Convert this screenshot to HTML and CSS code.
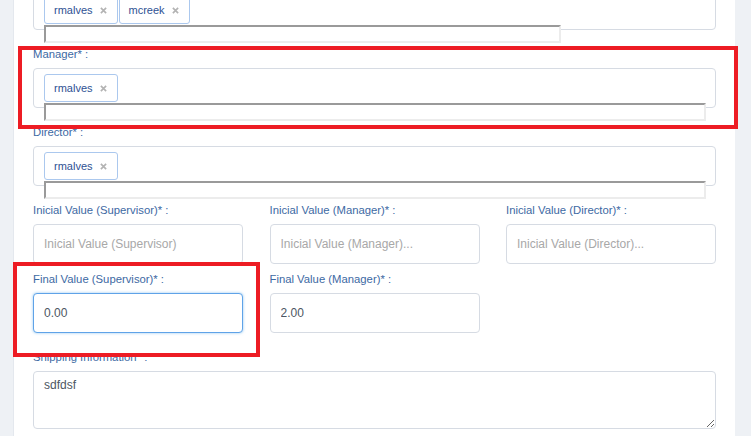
FILE: index.html
```html
<!DOCTYPE html>
<html>
<head>
<meta charset="utf-8">
<link rel="stylesheet" href="styles.css">
</head>
<body>
<div class="page">
  <div class="panel">
    <form class="form">
      <div class="group">
        <label class="label">Supervisor* :</label>
        <div class="tagbox">
          <div class="tags">
            <span class="tag">rmalves<svg class="x" viewBox="0 0 8 8"><path d="M1 1L7 7M7 1L1 7"/></svg></span>
            <span class="tag">mcreek<svg class="x" viewBox="0 0 8 8"><path d="M1 1L7 7M7 1L1 7"/></svg></span>
          </div>
          <input class="search short" type="text">
        </div>
      </div>
      <div class="group">
        <label class="label">Manager* :</label>
        <div class="tagbox">
          <div class="tags">
            <span class="tag">rmalves<svg class="x" viewBox="0 0 8 8"><path d="M1 1L7 7M7 1L1 7"/></svg></span>
          </div>
          <input class="search" type="text">
        </div>
      </div>
      <div class="group">
        <label class="label">Director* :</label>
        <div class="tagbox">
          <div class="tags">
            <span class="tag">rmalves<svg class="x" viewBox="0 0 8 8"><path d="M1 1L7 7M7 1L1 7"/></svg></span>
          </div>
          <input class="search" type="text">
        </div>
      </div>
      <div class="grid">
        <div class="cell">
          <label class="label">Inicial Value (Supervisor)* :</label>
          <input class="field" type="text" placeholder="Inicial Value (Supervisor)">
        </div>
        <div class="cell">
          <label class="label">Inicial Value (Manager)* :</label>
          <input class="field" type="text" placeholder="Inicial Value (Manager)...">
        </div>
        <div class="cell">
          <label class="label">Inicial Value (Director)* :</label>
          <input class="field" type="text" placeholder="Inicial Value (Director)...">
        </div>
        <div class="cell">
          <label class="label">Final Value (Supervisor)* :</label>
          <input class="field focus" type="text" value="0.00">
        </div>
        <div class="cell">
          <label class="label">Final Value (Manager)* :</label>
          <input class="field" type="text" value="2.00">
        </div>
      </div>
      <div class="group">
        <label class="label">Shipping Information* :</label>
        <textarea class="area">sdfdsf</textarea>
      </div>
    </form>
  </div>
  <div class="mark mark-one"></div>
  <div class="mark mark-two"></div>
</div>
</body>
</html>
```

FILE: styles.css
```css
* { box-sizing: border-box; }
html, body {
  margin: 0;
  padding: 0;
  background: #eef1f5;
  font-family: "Liberation Sans", Arial, sans-serif;
  overflow: hidden;
}
.page {
  position: relative;
  width: 751px;
  height: 436px;
  padding: 0 16px 0 13px;
  overflow: hidden;
}
.panel {
  display: flow-root;
  background: #fff;
  border-left: 1px solid #e4e8ee;
  height: 100%;
  padding: 0 19px 0 19px;
}
.form {
  margin-top: -32px;
}
.group {
  margin-bottom: 16px;
}
.label {
  display: block;
  font-size: 11.3px;
  line-height: 16px;
  height: 16px;
  color: #3d69a3;
  margin-bottom: 6px;
  white-space: nowrap;
}
.tagbox {
  height: 40px;
  border: 1px solid #d6dbe3;
  border-radius: 4px;
  padding: 5px 10px 0 10px;
}
.tags {
  display: flex;
  gap: 1px;
  margin-bottom: 1px;
}
.tag {
  display: inline-flex;
  align-items: center;
  height: 28px;
  border: 1px solid #abc8ee;
  border-radius: 3px;
  padding: 0 10px 0 9px;
  font-size: 11px;
  color: #2e5193;
  background: #fff;
}
.x {
  width: 7px;
  height: 7px;
  margin-left: 7px;
  margin-top: 1px;
  fill: none;
  stroke: #b3b3b3;
  stroke-width: 1.9;
}
.search {
  display: block;
  width: 662px;
  height: 18px;
  border-style: solid;
  border-width: 2px;
  border-color: #9a9a9a #ececec #ececec #9a9a9a;
  background: #fff;
  padding: 0;
  margin: 0;
  outline: none;
}
.search.short {
  width: 517px;
}
.grid {
  display: grid;
  grid-template-columns: repeat(3, 1fr);
  column-gap: 26.5px;
  row-gap: 7px;
  margin-bottom: 16px;
}
.field {
  display: block;
  width: 100%;
  height: 40px;
  border: 1px solid #d6dbe3;
  border-radius: 4px;
  padding: 0 10px;
  font-family: "Liberation Sans", Arial, sans-serif;
  font-size: 12px;
  color: #4d5662;
  background: #fff;
  outline: none;
}
.field::placeholder {
  color: #a8a8a8;
}
.field.focus {
  border-color: #5fa3e8;
  box-shadow: 0 0 3px rgba(102, 175, 233, 0.7);
}
.area {
  display: block;
  width: 100%;
  height: 58px;
  border: 1px solid #d6dbe3;
  border-radius: 4px;
  padding: 5px 10px;
  font-family: "Liberation Sans", Arial, sans-serif;
  font-size: 12px;
  line-height: 17px;
  color: #4d5662;
  background: #fff;
  resize: vertical;
  outline: none;
}
.mark {
  position: absolute;
  border: 4px solid #ed1c24;
  pointer-events: none;
}
.mark-one {
  left: 18px;
  top: 46px;
  width: 720px;
  height: 83px;
}
.mark-two {
  left: 13px;
  top: 262px;
  width: 247px;
  height: 95px;
}
```
